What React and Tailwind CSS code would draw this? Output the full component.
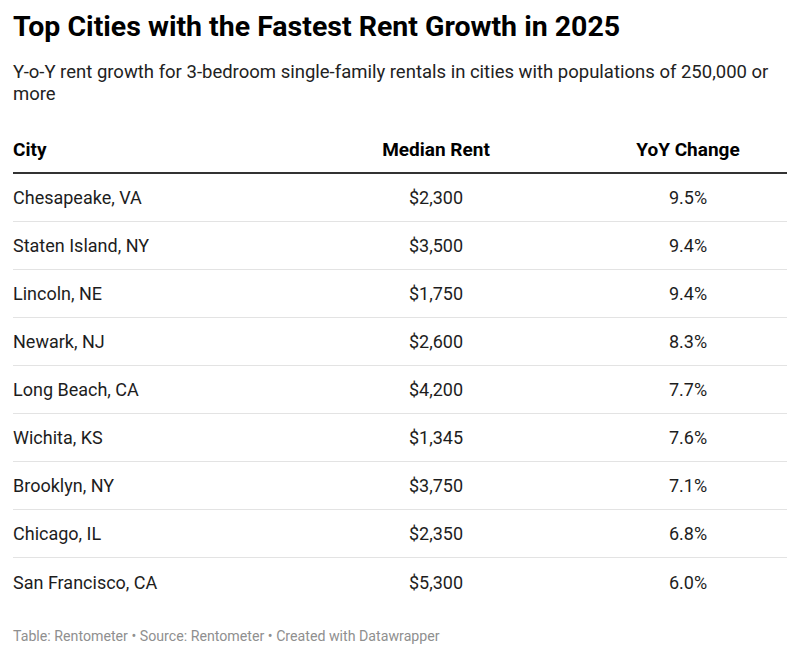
import React from "react";

const rows = [
  ["Chesapeake, VA", "$2,300", "9.5%"],
  ["Staten Island, NY", "$3,500", "9.4%"],
  ["Lincoln, NE", "$1,750", "9.4%"],
  ["Newark, NJ", "$2,600", "8.3%"],
  ["Long Beach, CA", "$4,200", "7.7%"],
  ["Wichita, KS", "$1,345", "7.6%"],
  ["Brooklyn, NY", "$3,750", "7.1%"],
  ["Chicago, IL", "$2,350", "6.8%"],
  ["San Francisco, CA", "$5,300", "6.0%"],
];

const App = () => {
  return (
    <div className="w-[800px] h-[658px] bg-white px-[13px] pt-[10px] font-['Roboto',sans-serif] text-[#1d1d1d]">
      <h1 className="text-[28.5px] leading-[34px] font-bold text-black">
        Top Cities with the Fastest Rent Growth in 2025
      </h1>
      <p className="mt-[17px] text-[18.5px] leading-[22px] text-[#222]">
        Y-o-Y rent growth for 3-bedroom single-family rentals in cities with populations of 250,000 or more
      </p>

      {/* table */}
      <div className="w-[774px] mt-[27px]">
        <div className="grid grid-cols-[343px_160px_271px] h-[42px] items-end pb-[11px] border-b-2 border-[#333] text-[19px] leading-[22px] font-bold text-black">
          <div>City</div>
          <div className="text-center">Median Rent</div>
          <div className="text-center pl-[73px]">YoY Change</div>
        </div>
        {rows.map((r, i) => (
          <div
            key={i}
            className={
              "grid grid-cols-[343px_160px_271px] h-[48px] items-center text-[18px] " +
              (i < rows.length - 1 ? "border-b border-[#e3e3e3]" : "")
            }
          >
            <div>{r[0]}</div>
            <div className="text-center">{r[1]}</div>
            <div className="text-center pl-[73px]">{r[2]}</div>
          </div>
        ))}
      </div>

      <div className="mt-[20px] text-[14.2px] leading-[20px] text-[#8f8f8f]">
        Table: Rentometer • Source: Rentometer • Created with Datawrapper
      </div>
    </div>
  );
};

export default App;
